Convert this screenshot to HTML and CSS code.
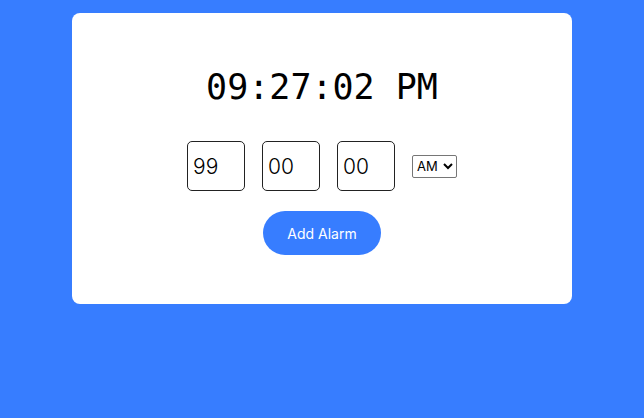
FILE: index.html
```html
<!DOCTYPE html>
<html>
<head>
<meta charset="utf-8">
<link rel="stylesheet" href="styles.css">
</head>
<body>
<div class="card">
  <div class="clock">09:27:02 PM</div>
  <div class="inputs">
    <input class="field" type="text" value="99">
    <input class="field" type="text" value="00">
    <input class="field" type="text" value="00">
    <select class="ampm"><option>AM</option><option>PM</option></select>
  </div>
  <button class="add">Add Alarm</button>
</div>
</body>
</html>
```
FILE: styles.css
```css
html, body {
  margin: 0;
  padding: 0;
}
body {
  background: #377dff;
  height: 418px;
  font-family: "Inter", "Noto Sans", sans-serif;
}
.card {
  width: 500px;
  height: 291px;
  margin: 13px auto 0;
  box-sizing: border-box;
  background: #fff;
  border-radius: 8px;
  display: flex;
  flex-direction: column;
  align-items: center;
  padding-top: 52px;
}
.clock {
  font-family: "DejaVu Sans Mono", monospace;
  font-size: 35px;
  line-height: 44px;
  height: 44px;
  color: #000;
}
.inputs {
  display: flex;
  align-items: center;
  gap: 17px;
  margin-top: 32px;
}
.field {
  width: 58px;
  height: 50px;
  box-sizing: border-box;
  border: 1px solid #222;
  border-radius: 5px;
  padding: 0 0 0 5px;
  font-family: "Inter", "Noto Sans", sans-serif;
  font-weight: 300;
  font-size: 21px;
  color: #000;
  outline: none;
}
.ampm {
  margin-left: 0;
  height: 23px;
  width: 45px;
  font-size: 13px;
  font-family: "Inter", "Noto Sans", sans-serif;
  border: 1px solid #767676;
  border-radius: 2px;
  background: #fff;
  color: #000;
}
.add {
  margin-top: 20px;
  width: 118px;
  height: 44px;
  border: none;
  border-radius: 22px;
  background: #377dff;
  color: #fff;
  font-family: "Inter", "Noto Sans", sans-serif;
  font-size: 14px;
}
```
